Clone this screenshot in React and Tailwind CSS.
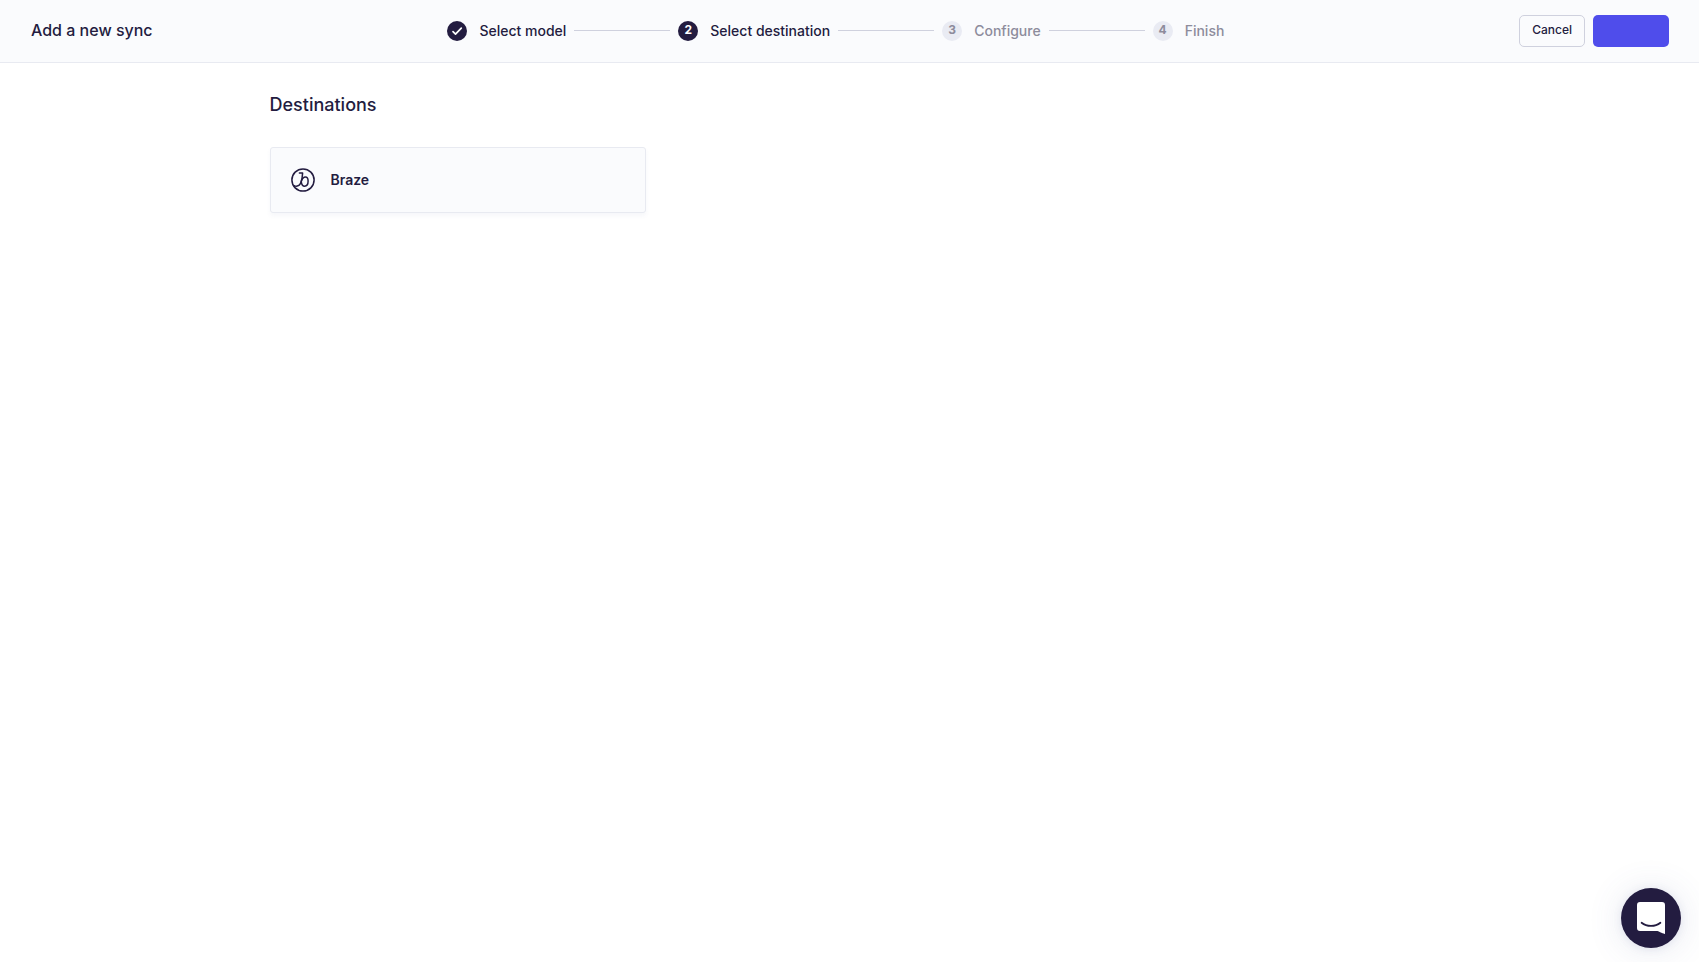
import { Fragment, useState } from 'react';

const steps = ['Select model', 'Select destination', 'Configure', 'Finish'];

const destinations = [{ id: 'braze', name: 'Braze', Logo: BrazeLogo }];

function CheckIcon() {
    return (
        <svg viewBox="0 0 20 20" className="w-5 h-5" fill="none" stroke="currentColor" strokeWidth="1.7" strokeLinecap="round" strokeLinejoin="round" aria-hidden="true">
            <path d="M6 10.7l2.5 2.4 5.8-6" />
        </svg>
    );
}

function BrazeLogo() {
    return (
        <svg viewBox="0 0 24 24" className="w-6 h-6" fill="none" stroke="currentColor" strokeWidth="1.5" strokeLinecap="round" strokeLinejoin="round" aria-hidden="true">
            <circle cx="12" cy="12" r="11.1" />
            <path d="M8.4 5.100h3.200c-.2 3.400-.7 6.500-1.500 9-1 3-2.600 4.100-4.700 4.100-.9 0-1.700-.2-2.400-.6" />
            <path d="M10.200 13.600c1-2.900 2.600-4.500 4.200-4.500 1.700 0 2.700 1.600 2.700 4 0 3-1.400 5.100-3.500 5.100-1.800 0-3-1.600-3.400-4.600z" />
        </svg>
    );
}

function ChatIcon() {
    return (
        <svg viewBox="0 0 28 32" className="w-7 h-8" aria-hidden="true">
            <path d="M3 0h22a3 3 0 0 1 3 3v29s-3.900-1.300-7.500-3H3a3 3 0 0 1-3-3V3a3 3 0 0 1 3-3z" fill="currentColor" />
            <path d="M4.600 20.700c5.200 4.300 13.600 4.300 18.800 0" fill="none" stroke="#231c40" strokeWidth="1.800" strokeLinecap="round" />
        </svg>
    );
}

function Stepper({ current }) {
    return (
        <ol className="flex items-center gap-2">
            {steps.map((label, i) => (
                <Fragment key={label}>
                    {i > 0 && <li className="w-24 h-px mb-px bg-[#cfd1de]" aria-hidden="true" />}
                    <li className={`flex items-center gap-3 ${i <= current ? 'text-[#231c40]' : 'text-[#8d8c9c]'}`}>
                        <span className={`w-5 h-5 rounded-full flex items-center justify-center text-xs leading-4 font-bold ${i <= current ? 'bg-[#231c40] text-white' : 'bg-[#e9ebf3]'}`}>
                            {i < current ? <CheckIcon /> : <span className="pb-0.5">{i + 1}</span>}
                        </span>
                        <span className="text-sm font-medium whitespace-nowrap">{label}</span>
                    </li>
                </Fragment>
            ))}
        </ol>
    );
}

function App() {
    const [selected, setSelected] = useState(null);

    return (
        <div className="min-h-screen bg-white text-[#231c40] font-['Inter',sans-serif]">
            <header className="flex items-center justify-between pl-[31px] pr-[30px] py-[15px] bg-[#fafbfd] border-b border-[#e8eaf1]">
                <h1 className="pb-0.5 text-base font-medium">Add a new sync</h1>
                <Stepper current={1} />
                <div className="flex items-center gap-2">
                    <button className="h-8 px-3 pb-0.5 text-xs font-medium rounded-[5px] border border-[#cfd1de] hover:bg-gray-50">
                        Cancel
                    </button>
                    <button className="w-[76px] h-8 rounded-[5px] bg-[#4f4deb]" aria-label="Continue" />
                </div>
            </header>

            <main className="max-w-[1160px] mx-auto pt-7">
                <h2 className="text-lg leading-7 font-medium">Destinations</h2>
                <div className="grid grid-cols-3 gap-4 mt-7">
                    {destinations.map(({ id, name, Logo }) => (
                        <button
                            key={id}
                            onClick={() => setSelected(id)}
                            aria-pressed={selected === id}
                            className="flex items-center gap-4 p-5 rounded-[3px] bg-[#fafbfd] border border-[#e8eaf1] shadow-[0_3px_4px_rgba(80,90,150,0.05)]"
                        >
                            <Logo />
                            <span className="text-sm leading-6 font-semibold">{name}</span>
                        </button>
                    ))}
                </div>
            </main>

            <button
                className="fixed right-[18px] bottom-[14px] w-[60px] h-[60px] rounded-full bg-[#231c40] text-white flex items-center justify-center shadow-[0_1px_8px_rgba(80,90,150,0.12),0_2px_36px_rgba(80,90,150,0.14)]"
                aria-label="Open chat"
            >
                <ChatIcon />
            </button>
        </div>
    );
}

export default App;
